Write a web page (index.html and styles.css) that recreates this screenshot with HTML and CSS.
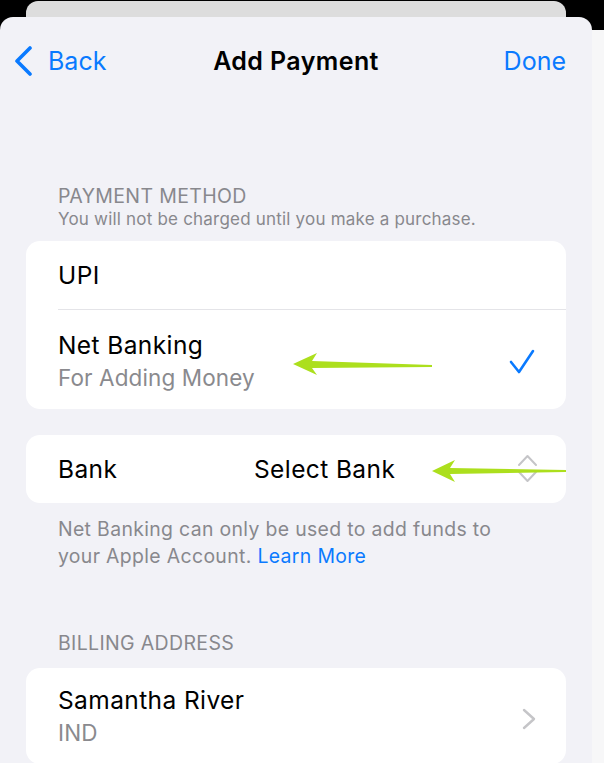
FILE: index.html
```html
<!DOCTYPE html>
<html lang="en">
<head>
<meta charset="utf-8">
<title>Add Payment</title>
<link rel="stylesheet" href="styles.css">
</head>
<body>
<div class="page">
  <div class="back-card"></div>
  <div class="sheet">
    <nav class="nav">
      <a class="nav-back">
        <svg class="back-chev" width="20" height="30" viewBox="0 0 20 30"><polyline points="16,2 3,15 16,28" fill="none" stroke="#0a7aff" stroke-width="3.6" stroke-linecap="round" stroke-linejoin="round"/></svg>
        <span>Back</span>
      </a>
      <h1 class="nav-title">Add Payment</h1>
      <a class="nav-done">Done</a>
    </nav>

    <div class="content">
      <div class="section-head first">
        <div class="section-title">PAYMENT METHOD</div>
        <div class="section-sub">You will not be charged until you make a purchase.</div>
      </div>

      <div class="card">
        <div class="row row-single">
          <span class="label">UPI</span>
        </div>
        <div class="row row-double divided">
          <div class="stack">
            <span class="label">Net Banking</span>
            <span class="sub">For Adding Money</span>
          </div>
          <svg class="check" width="26" height="26" viewBox="0 0 26 26"><polyline points="2,13 10,23 24,2" fill="none" stroke="#0a7aff" stroke-width="2.6" stroke-linecap="round" stroke-linejoin="round"/></svg>
        </div>
      </div>

      <div class="card card-bank">
        <div class="row row-single bank-row">
          <span class="label">Bank</span>
          <span class="label">Select Bank</span>
          <svg class="updown" width="22" height="30" viewBox="0 0 22 30"><polyline points="2,11 10.5,2 19,11" fill="none" stroke="#c5c5c8" stroke-width="2" stroke-linecap="round" stroke-linejoin="round"/><polyline points="2,18 10.5,27 19,18" fill="none" stroke="#c5c5c8" stroke-width="2" stroke-linecap="round" stroke-linejoin="round"/></svg>
        </div>
      </div>

      <div class="footnote">
        <div class="foot-line">Net Banking can only be used to add funds to</div>
        <div class="foot-line"><span>your Apple Account.</span> <span class="link">Learn More</span></div>
      </div>

      <div class="section-head billing">
        <div class="section-title">BILLING ADDRESS</div>
      </div>

      <div class="card card-address">
        <div class="row row-double">
          <div class="stack">
            <span class="label">Samantha River</span>
            <span class="sub">IND</span>
          </div>
          <svg class="chev-right" width="14" height="22" viewBox="0 0 14 22"><polyline points="2,2 12,11 2,20" fill="none" stroke="#c5c5c8" stroke-width="2.4" stroke-linecap="round" stroke-linejoin="round"/></svg>
        </div>
      </div>
    </div>
  </div>

  <svg class="annotations" width="604" height="763" viewBox="0 0 604 763">
    <polygon points="293,363 317,352 312,360 432,364 432,366 312,367 317,374" fill="#acdf1d"/>
    <polygon points="432,470 455,459 450,467 566,469 566,471 450,473 455,481" fill="#acdf1d"/>
  </svg>
</div>
</body>
</html>
```
FILE: styles.css
```css
* { box-sizing: border-box; }
html, body { margin: 0; padding: 0; }
body {
  width: 604px;
  height: 763px;
  overflow: hidden;
  background: linear-gradient(#000 0 30px, #f7f7f8 30px);
  font-family: Inter, "Noto Sans", "Liberation Sans", sans-serif;
  -webkit-font-smoothing: antialiased;
}
.page {
  position: relative;
  width: 604px;
  height: 763px;
}
.back-card {
  margin: 1px 38px 0 26px;
  height: 30px;
  background: #dddddd;
  border-radius: 12px 12px 0 0;
}
.sheet {
  margin-top: -14px;
  width: 592px;
  height: 746px;
  background: #f2f2f7;
  border-radius: 13px 13px 0 0;
  overflow: hidden;
}
.nav {
  margin-top: 22px;
  height: 44px;
  display: grid;
  grid-template-columns: 1fr auto 1fr;
  align-items: center;
  padding: 0 26px;
}
.nav-back {
  display: flex;
  align-items: center;
  gap: 14px;
  margin-left: -12px;
  color: #0a7aff;
  font-size: 25px;
  letter-spacing: 0;
}
.back-chev { display: block; }
.nav-title {
  margin: 0;
  font-size: 25px;
  font-weight: 600;
  color: #000;
  letter-spacing: 0.4px;
}
.nav-done {
  justify-self: end;
  color: #0a7aff;
  font-size: 25px;
  letter-spacing: 0;
}
.content {
  padding: 0 26px;
  display: flex;
  flex-direction: column;
}
.section-head {
  padding-left: 32px;
  color: #88888d;
}
.section-head.first { margin-top: 101px; }
.section-title {
  font-size: 19.5px;
  line-height: 24px;
  letter-spacing: 0.35px;
}
.section-sub {
  font-size: 17px;
  line-height: 22px;
  letter-spacing: 0.2px;
}
.card {
  background: #fff;
  border-radius: 14px;
  overflow: hidden;
}
.section-head.first + .card { margin-top: 11px; }
.card-bank { margin-top: 26px; }
.row {
  display: flex;
  align-items: center;
  justify-content: space-between;
  padding-left: 32px;
  position: relative;
}
.row-single { height: 68px; }
.row-double { padding-top: 20px; padding-bottom: 16px; }
.divided::before {
  content: "";
  position: absolute;
  top: 0;
  left: 32px;
  right: 0;
  height: 1px;
  background: #e4e4e8;
}
.divided { padding-top: 21px; }
.stack {
  display: flex;
  flex-direction: column;
  gap: 3px;
}
.label {
  font-size: 24.5px;
  line-height: 30px;
  color: #000;
  letter-spacing: 0.4px;
}
.sub {
  font-size: 22.5px;
  line-height: 30px;
  color: #8a8a8e;
  letter-spacing: 0.1px;
}
.check { margin-right: 31px; }
.bank-row {
  display: grid;
  grid-template-columns: 196px 1fr auto;
  align-items: center;
}
.updown { margin-right: 27px; }
.footnote {
  margin-top: 13px;
  padding: 0 20px 0 32px;
  font-size: 19.4px;
  line-height: 27px;
  letter-spacing: 0.35px;
  color: #88888d;
}
.foot-line { white-space: nowrap; }
.link { color: #0a7aff; }
.section-head.billing { margin-top: 61px; }
.card-address { margin-top: 13px; }
.card-address .row-double { padding-top: 17px; }
.chev-right { margin-right: 30px; margin-top: 4px; }
.annotations {
  position: absolute;
  top: 0;
  left: 0;
  pointer-events: none;
}
```
